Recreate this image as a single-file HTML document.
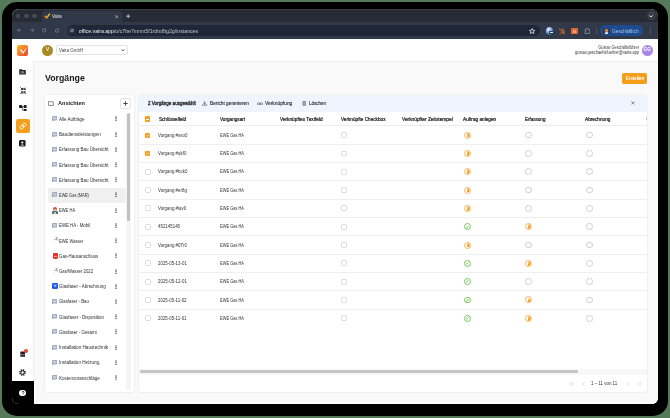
<!DOCTYPE html>
<html><head><meta charset="utf-8"><style>
html,body{margin:0;padding:0;width:670px;height:418px;overflow:hidden;background:#547a59;font-family:"Liberation Sans",sans-serif}
#frame{position:absolute;left:2px;top:1.6px;width:665.8px;height:414.1px;background:#000;border-radius:15px}
#win{position:absolute;left:12px;top:9px;width:646.4px;height:394.5px;border-radius:6.5px 7.5px 6px 6px;overflow:hidden;background:#f9f9f9}
#in{position:absolute;left:-12px;top:-9px;width:670px;height:418px;will-change:transform}
</style></head><body>
<div id="frame"></div>
<div id="win"><div id="in">
<div style="position:absolute;left:12.00px;top:9.00px;width:647.00px;height:13.30px;background:#272b35"></div>
<div style="position:absolute;left:12.00px;top:8.60px;width:647.00px;height:1.30px;background:#3a3e46"></div>
<div style="position:absolute;left:41.50px;top:11.00px;width:80.50px;height:12.00px;background:#313949;border-radius:3.5px 3.5px 0 0"></div>
<div style="position:absolute;left:16.30px;top:14.00px;width:4.20px;height:4.20px;border-radius:50%;box-sizing:border-box;background:#474b54"></div>
<div style="position:absolute;left:24.40px;top:14.00px;width:4.20px;height:4.20px;border-radius:50%;box-sizing:border-box;background:#474b54"></div>
<div style="position:absolute;left:32.40px;top:14.00px;width:4.20px;height:4.20px;border-radius:50%;box-sizing:border-box;background:#474b54"></div>
<svg style="position:absolute;left:43.80px;top:12.80px" width="6.4" height="5.8" viewBox="0 0 6.4 5.8"><defs><linearGradient id="tg" x1="0" y1="1" x2="1" y2="0"><stop offset="0" stop-color="#f08a1e"/><stop offset="1" stop-color="#f7cf1d"/></linearGradient></defs><path d="M0.7 2.9L2.6 5L5.8 0.6" stroke="url(#tg)" stroke-width="1.4" fill="none" stroke-linejoin="round"/></svg>
<div style="position:absolute;left:52.40px;top:12.95px;font-size:5.000px;line-height:6.50px;color:#e3e5e8;font-weight:400;white-space:nowrap;transform:scaleX(0.8495);transform-origin:0 50%">Vaira</div>
<svg style="position:absolute;left:114.80px;top:14.50px" width="3.4" height="3.4" viewBox="0 0 3.4 3.4"><path d="M0.3 0.3L3.1 3.1M3.1 0.3L0.3 3.1" stroke="#c7cacf" stroke-width="0.7"/></svg>
<svg style="position:absolute;left:126.30px;top:14.00px" width="4.4" height="4.4" viewBox="0 0 4.4 4.4"><path d="M2.2 0.2V4.2M0.2 2.2H4.2" stroke="#d0d3d8" stroke-width="0.85"/></svg>
<div style="position:absolute;left:646.70px;top:11.10px;width:9.40px;height:9.40px;background:#3a3e47;border-radius:4.7px"></div>
<svg style="position:absolute;left:649.40px;top:14.60px" width="4" height="2.8" viewBox="0 0 4 2.8"><path d="M0.5 0.5L2 2.1L3.5 0.5" stroke="#eceef1" stroke-width="0.95" fill="none"/></svg>
<div style="position:absolute;left:12.00px;top:22.30px;width:647.00px;height:16.30px;background:#313949"></div>
<svg style="position:absolute;left:16.80px;top:28.40px" width="4.4" height="4.4" viewBox="0 0 4.4 4.4"><path d="M4.2 2.2H0.6M2.2 0.5L0.5 2.2L2.2 3.9" stroke="#8d939c" stroke-width="0.6" fill="none"/></svg>
<svg style="position:absolute;left:29.70px;top:28.40px" width="4.4" height="4.4" viewBox="0 0 4.4 4.4"><path d="M0.2 2.2H3.8M2.2 0.5L3.9 2.2L2.2 3.9" stroke="#8d939c" stroke-width="0.6" fill="none"/></svg>
<svg style="position:absolute;left:42.20px;top:28.40px" width="4.4" height="4.4" viewBox="0 0 4.4 4.4"><path d="M3.7 1.2A1.8 1.8 0 1 0 4 2.4" stroke="#8d939c" stroke-width="0.6" fill="none"/><path d="M3.9 0.2V1.5H2.6" stroke="#8d939c" stroke-width="0.6" fill="none"/></svg>
<svg style="position:absolute;left:54.70px;top:28.30px" width="4.4" height="4.4" viewBox="0 0 4.4 4.4"><path d="M0.5 2L2.2 0.5L3.9 2V4H0.5Z" stroke="#8d939c" stroke-width="0.6" fill="none"/></svg>
<div style="position:absolute;left:67.00px;top:25.30px;width:473.00px;height:10.80px;background:#1f2637;border-radius:5.4px"></div>
<div style="position:absolute;left:68.20px;top:27.10px;width:7.20px;height:7.20px;border-radius:50%;box-sizing:border-box;background:#2d3443"></div>
<svg style="position:absolute;left:69.80px;top:28.90px" width="4" height="3.6" viewBox="0 0 4 3.6"><path d="M0.2 0.8H2M3 0.8H3.8M0.2 2.8H1M2 2.8H3.8" stroke="#c9ccd1" stroke-width="0.55"/><circle cx="2.5" cy="0.8" r="0.55" stroke="#c9ccd1" stroke-width="0.5" fill="none"/><circle cx="1.5" cy="2.8" r="0.55" stroke="#c9ccd1" stroke-width="0.5" fill="none"/></svg>
<div style="position:absolute;left:78.80px;top:27.62px;font-size:5.200px;line-height:6.76px;color:#bfc3ca;font-weight:400;white-space:nowrap;transform-origin:0 50%"><span style="color:#eceef1">office.vaira.app</span>/o/c7be7mnm5f1rdro8tg2g/instances</div>
<svg style="position:absolute;left:529.30px;top:27.80px" width="6.4" height="6.2" viewBox="0 0 6.4 6.2"><path d="M3.2 0.5L4 2.3L5.9 2.4L4.4 3.6L4.9 5.5L3.2 4.5L1.5 5.5L2 3.6L0.5 2.4L2.4 2.3Z" stroke="#e3e6ea" stroke-width="0.8" fill="none" stroke-linejoin="round"/></svg>
<div style="position:absolute;left:546.3px;top:27.4px;width:7.2px;height:7.2px;border-radius:50%;background:radial-gradient(circle at 35% 30%,#e8f0fb 0%,#8fb5e6 35%,#2f63b0 70%,#1e3f7a 100%)"></div>
<div style="position:absolute;left:549.20px;top:31.20px;width:4.00px;height:2.60px;background:#2a3f66;border-radius:0.6px"></div>
<div style="position:absolute;left:549.80px;top:31.70px;width:2.80px;height:1.40px;background:#d5e2f5"></div>
<svg style="position:absolute;left:558.80px;top:27.50px" width="6.6" height="7" viewBox="0 0 6.6 7"><circle cx="4" cy="3.8" r="1.3" stroke="#e2703a" stroke-width="0.9" fill="none"/><path d="M4 2.4V0.6M2.8 4.4L1 6.2M5 5L6 6.4M2.9 3L0.8 1.2" stroke="#e2703a" stroke-width="0.8" stroke-linecap="round"/><circle cx="0.9" cy="1.1" r="0.7" fill="#e2703a"/></svg>
<div style="position:absolute;left:571.00px;top:28.00px;width:6.50px;height:6.10px;background:#d86a33;border-radius:0.6px"></div>
<div style="position:absolute;left:572.60px;top:29.50px;width:3.30px;height:3.10px;background:#ea9a6e"></div>
<svg style="position:absolute;left:583.80px;top:27.80px" width="6.4" height="6.4" viewBox="0 0 6.4 6.4"><path d="M1 1.3H2.6Q2.6 0.4 3.3 0.4Q4 0.4 4 1.3H5.4V2.8Q6.1 2.8 6.1 3.5Q6.1 4.2 5.4 4.2V5.6H1V4.2Q1.7 4.2 1.7 3.5Q1.7 2.8 1 2.8Z" stroke="#9ea3aa" stroke-width="0.7" fill="none"/></svg>
<div style="position:absolute;left:596.10px;top:27.80px;width:0.60px;height:6.20px;background:#4d535d"></div>
<div style="position:absolute;left:599.70px;top:25.20px;width:43.40px;height:11.30px;background:#1d4b8d;border-radius:5.65px"></div>
<div style="position:absolute;left:603.40px;top:27.90px;width:6.20px;height:6.20px;border-radius:50%;box-sizing:border-box;background:#3b3a40"></div>
<div style="position:absolute;left:605.40px;top:29.30px;width:2.60px;height:2.60px;border-radius:50%;box-sizing:border-box;background:#c98a62"></div>
<div style="position:absolute;left:605.40px;top:32.20px;width:2.60px;height:1.60px;background:#e0e0e0;border-radius:1px 1px 0 0"></div>
<div style="position:absolute;left:612.20px;top:27.52px;font-size:5.200px;line-height:6.76px;color:#a8c3ec;font-weight:400;white-space:nowrap;transform:scaleX(0.9332);transform-origin:0 50%">Geschäftlich</div>
<svg style="position:absolute;left:649.60px;top:27.40px" width="1.8" height="7" viewBox="0 0 1.8 7"><circle cx="0.9" cy="1" r="0.55" fill="#a9aeb5"/><circle cx="0.9" cy="3.4" r="0.55" fill="#a9aeb5"/><circle cx="0.9" cy="5.8" r="0.55" fill="#a9aeb5"/></svg>
<div style="position:absolute;left:12.00px;top:38.60px;width:647.00px;height:365.00px;background:#f9f9f9"></div>
<div style="position:absolute;left:12.00px;top:38.60px;width:647.00px;height:22.20px;background:#fff"></div>
<div style="position:absolute;left:12.00px;top:60.60px;width:647.00px;height:0.80px;background:#ececec"></div>
<div style="position:absolute;left:12.00px;top:61.40px;width:21.00px;height:343.00px;background:#fff"></div>
<div style="position:absolute;left:33.00px;top:61.40px;width:0.60px;height:343.00px;background:#efefef"></div>
<div style="position:absolute;left:17.3px;top:44.6px;width:11.1px;height:11.1px;border-radius:2px;background:linear-gradient(135deg,#f9b41c 0%,#f5842a 45%,#ec5a2c 80%,#e4432a 100%)"></div>
<svg style="position:absolute;left:17.30px;top:44.60px" width="11.1" height="11.1" viewBox="0 0 11.1 11.1"><path d="M2.9 5.1L4.7 4.4L6 6.9L9.2 2.9L9.6 3.3L6.2 8.9Z" fill="#f2f7fa"/></svg>
<div style="position:absolute;left:42.00px;top:44.50px;width:11.20px;height:11.20px;border-radius:50%;box-sizing:border-box;background:#a98b26"></div>
<div style="position:absolute;left:-52.40px;width:200px;text-align:center;top:47.21px;font-size:4.600px;line-height:5.98px;color:#f6efd8;font-weight:700;white-space:nowrap;transform-origin:50% 50%">V</div>
<div style="position:absolute;left:56.30px;top:44.50px;width:71.40px;height:10.90px;border:0.6px solid #e3e3e3;border-radius:1.8px;background:#fff;box-sizing:border-box"></div>
<div style="position:absolute;left:59.20px;top:46.95px;font-size:5.000px;line-height:6.50px;color:#4a4a4a;font-weight:400;white-space:nowrap;transform:scaleX(0.8918);transform-origin:0 50%">Vaira GmbH</div>
<svg style="position:absolute;left:120.90px;top:48.90px" width="3.8" height="2.6" viewBox="0 0 3.8 2.6"><path d="M0.4 0.4L1.9 2L3.4 0.4" stroke="#333" stroke-width="0.8" fill="none"/></svg>
<div style="position:absolute;right:31.20px;top:44.54px;font-size:4.550px;line-height:5.92px;color:#3a3a3a;font-weight:400;white-space:nowrap;transform:scaleX(0.8492);transform-origin:100% 50%">Gustav Geschäftsführer</div>
<div style="position:absolute;right:31.20px;top:49.94px;font-size:4.550px;line-height:5.92px;color:#3a3a3a;font-weight:400;white-space:nowrap;transform:scaleX(0.8639);transform-origin:100% 50%">gustav.geschaeftsfuehrer@vaira.app</div>
<div style="position:absolute;left:641.60px;top:44.50px;width:11.20px;height:11.20px;border-radius:50%;box-sizing:border-box;background:#a887e2"></div>
<div style="position:absolute;left:547.20px;width:200px;text-align:center;top:47.15px;font-size:4.700px;line-height:6.11px;color:#fff;font-weight:700;white-space:nowrap;transform-origin:50% 50%">GG</div>
<svg style="position:absolute;left:19.20px;top:69.40px" width="7" height="5.8" viewBox="0 0 7 5.8"><path d="M0.2 0.9Q0.2 0.2 0.9 0.2H2.7L3.4 0.9H6.2Q6.8 0.9 6.8 1.5V5Q6.8 5.6 6.2 5.6H0.9Q0.2 5.6 0.2 5Z" fill="#1d1d1f"/><path d="M1.5 2.2H5.3V4.5H1.5Z" fill="#9a9a9a"/><path d="M2 3H4.6M2 3.8H4" stroke="#1d1d1f" stroke-width="0.4"/></svg>
<svg style="position:absolute;left:19.80px;top:86.80px" width="6.6" height="7.4" viewBox="0 0 6.6 7.4"><path d="M0.4 0.4L2.6 2.6M2.6 0.9V2.6H0.9M6.2 0.4L4 2.6M4 0.9V2.6H5.7M0.4 7L2.6 4.8M0.9 4.8H2.6V6.5M6.2 7L4 4.8M5.7 4.8H4V6.5" stroke="#1d1d1f" stroke-width="0.9" fill="none"/></svg>
<svg style="position:absolute;left:18.90px;top:104.70px" width="7.8" height="6.6" viewBox="0 0 7.8 6.6"><rect x="0.1" y="0.1" width="3" height="3" rx="0.7" fill="#1d1d1f"/><rect x="4.8" y="0.1" width="2.8" height="3" rx="0.7" fill="#1d1d1f"/><rect x="4.8" y="3.9" width="2.8" height="2.6" rx="0.7" fill="#1d1d1f"/><path d="M3 1.6H5M3.6 1.6V5.2H5" stroke="#1d1d1f" stroke-width="0.6" fill="none"/></svg>
<div style="position:absolute;left:15.90px;top:119.10px;width:14.00px;height:13.80px;background:#f59e1b;border-radius:2.2px"></div>
<svg style="position:absolute;left:18.90px;top:122.00px" width="8" height="8" viewBox="0 0 8 8"><g transform="rotate(-45 4 4)"><rect x="0.4" y="2.5" width="4.2" height="3" rx="1.5" stroke="#fff" stroke-width="0.9" fill="none"/><rect x="3.4" y="2.5" width="4.2" height="3" rx="1.5" stroke="#fff" stroke-width="0.9" fill="none"/></g></svg>
<svg style="position:absolute;left:19.20px;top:140.20px" width="6.6" height="6.6" viewBox="0 0 6.6 6.6"><rect x="0" y="0" width="6.6" height="6.6" rx="1.4" fill="#1d1d1f"/><circle cx="3.3" cy="2.5" r="1.1" fill="#fff"/><path d="M1.3 5.5Q3.3 3.3 5.3 5.5Z" fill="#fff"/></svg>
<svg style="position:absolute;left:19.60px;top:351.20px" width="5.8" height="6" viewBox="0 0 5.8 6"><path d="M0.4 1.2Q0.4 0.6 1 0.6H4.8Q5.4 0.6 5.4 1.2V5.2Q5.4 5.7 4.8 5.7H1Q0.4 5.7 0.4 5.2Z" fill="#1d1d1f"/><path d="M1 3.4H2.1L2.5 4H3.3L3.7 3.4H4.8" stroke="#fff" stroke-width="0.5" fill="none"/></svg>
<div style="position:absolute;left:24.35px;top:349.15px;width:3.50px;height:3.50px;border-radius:50%;box-sizing:border-box;background:#ee4b3f"></div>
<svg style="position:absolute;left:19.10px;top:368.80px" width="7" height="7" viewBox="0 0 7 7"><circle cx="3.5" cy="3.5" r="2.5" stroke="#1d1d1f" stroke-width="1.8" stroke-dasharray="1.1 0.86" fill="none"/><circle cx="3.5" cy="3.5" r="1.7" stroke="#1d1d1f" stroke-width="0.9" fill="none"/></svg>
<div style="position:absolute;left:12.00px;top:381.00px;width:21.60px;height:23.00px;background:#000"></div>
<div style="position:absolute;left:33.60px;top:381.00px;width:1.40px;height:23.00px;background:#fff"></div>
<div style="position:absolute;left:33.60px;top:401.70px;width:626.00px;height:2.00px;background:#fff"></div>
<div style="position:absolute;left:19.40px;top:389.50px;width:6.40px;height:6.40px;border-radius:50%;box-sizing:border-box;background:#fff"></div>
<svg style="position:absolute;left:20.60px;top:390.50px" width="4" height="4.4" viewBox="0 0 4 4.4"><path d="M1 1.4Q1 0.4 2 0.4Q3.1 0.4 3.1 1.4Q3.1 2 2.3 2.4Q2 2.6 2 3.1" stroke="#000" stroke-width="0.7" fill="none"/><circle cx="2" cy="4" r="0.4" fill="#000"/></svg>
<div style="position:absolute;left:44.90px;top:72.92px;font-size:9.200px;line-height:11.96px;color:#1a1a1a;font-weight:700;white-space:nowrap;transform:scaleX(0.9558);transform-origin:0 50%">Vorgänge</div>
<div style="position:absolute;left:622.00px;top:72.50px;width:25.00px;height:11.10px;background:#f59e1b;border-radius:1.8px"></div>
<div style="position:absolute;left:534.50px;width:200px;text-align:center;top:74.65px;font-size:5.000px;line-height:6.50px;color:#fff;font-weight:700;white-space:nowrap;transform:scaleX(0.8665);transform-origin:50% 50%">Erstellen</div>
<div style="position:absolute;left:45.00px;top:95.00px;width:88.50px;height:297.00px;background:#fff;border-radius:2px;box-shadow:0 0 0 0.6px #ececec,0 0.6px 1px rgba(0,0,0,0.04)"></div>
<svg style="position:absolute;left:47.80px;top:101.00px" width="6.2" height="4.8" viewBox="0 0 6.2 4.8"><path d="M0.4 0.9Q0.4 0.4 0.9 0.4H2.4L3 1H5.3Q5.8 1 5.8 1.5V4Q5.8 4.4 5.3 4.4H0.9Q0.4 4.4 0.4 4Z" stroke="#333" stroke-width="0.6" fill="none"/></svg>
<div style="position:absolute;left:57.60px;top:99.60px;font-size:6.000px;line-height:7.80px;color:#222;font-weight:700;white-space:nowrap;transform:scaleX(0.9310);transform-origin:0 50%">Ansichten</div>
<div style="position:absolute;left:120.10px;top:97.80px;width:10.60px;height:10.80px;border:0.6px solid #e4e4e4;border-radius:1.8px;background:#fff;box-sizing:border-box"></div>
<svg style="position:absolute;left:122.80px;top:100.90px" width="5" height="5" viewBox="0 0 5 5"><path d="M2.5 0.2V4.8M0.2 2.5H4.8" stroke="#222" stroke-width="0.75"/></svg>
<div style="position:absolute;left:126.00px;top:112.50px;width:4.60px;height:277.00px;background:#f5f5f5"></div>
<div style="position:absolute;left:126.60px;top:112.50px;width:3.40px;height:108.00px;background:#c1c1c1;border-radius:1.7px"></div>
<svg style="position:absolute;left:52.00px;top:116.30px" width="5.4" height="5.2" viewBox="0 0 5.4 5.2"><path d="M0.5 1Q0.5 0.5 1 0.5H4.6Q5 0.5 5 1V3.6Q5 4.1 4.6 4.1H1.6L0.5 4.9Z" fill="#c3cddb" stroke="#6f7f98" stroke-width="0.6"/></svg>
<div style="position:absolute;left:59.10px;top:115.85px;font-size:5.000px;line-height:6.50px;color:#2e2e2e;font-weight:400;white-space:nowrap;transform:scaleX(0.9030);transform-origin:0 50%">Alle Aufträge</div>
<svg style="position:absolute;left:115.10px;top:116.30px" width="2" height="5.6" viewBox="0 0 2 5.6"><circle cx="1" cy="1" r="0.68" fill="#3a3a3a"/><circle cx="1" cy="2.8" r="0.68" fill="#3a3a3a"/><circle cx="1" cy="4.6" r="0.68" fill="#3a3a3a"/></svg>
<svg style="position:absolute;left:52.00px;top:131.52px" width="5.4" height="5.2" viewBox="0 0 5.4 5.2"><path d="M0.5 1Q0.5 0.5 1 0.5H4.6Q5 0.5 5 1V3.6Q5 4.1 4.6 4.1H1.6L0.5 4.9Z" fill="#c3cddb" stroke="#6f7f98" stroke-width="0.6"/></svg>
<div style="position:absolute;left:59.10px;top:131.07px;font-size:5.000px;line-height:6.50px;color:#2e2e2e;font-weight:400;white-space:nowrap;transform:scaleX(0.9260);transform-origin:0 50%">Baudienstleistungen</div>
<svg style="position:absolute;left:115.10px;top:131.52px" width="2" height="5.6" viewBox="0 0 2 5.6"><circle cx="1" cy="1" r="0.68" fill="#3a3a3a"/><circle cx="1" cy="2.8" r="0.68" fill="#3a3a3a"/><circle cx="1" cy="4.6" r="0.68" fill="#3a3a3a"/></svg>
<svg style="position:absolute;left:52.00px;top:146.74px" width="5.4" height="5.2" viewBox="0 0 5.4 5.2"><path d="M0.5 1Q0.5 0.5 1 0.5H4.6Q5 0.5 5 1V3.6Q5 4.1 4.6 4.1H1.6L0.5 4.9Z" fill="#c3cddb" stroke="#6f7f98" stroke-width="0.6"/></svg>
<div style="position:absolute;left:59.10px;top:146.29px;font-size:5.000px;line-height:6.50px;color:#2e2e2e;font-weight:400;white-space:nowrap;transform:scaleX(0.8969);transform-origin:0 50%">Erfassung Bau Übersicht</div>
<svg style="position:absolute;left:115.10px;top:146.74px" width="2" height="5.6" viewBox="0 0 2 5.6"><circle cx="1" cy="1" r="0.68" fill="#3a3a3a"/><circle cx="1" cy="2.8" r="0.68" fill="#3a3a3a"/><circle cx="1" cy="4.6" r="0.68" fill="#3a3a3a"/></svg>
<svg style="position:absolute;left:52.00px;top:161.96px" width="5.4" height="5.2" viewBox="0 0 5.4 5.2"><path d="M0.5 1Q0.5 0.5 1 0.5H4.6Q5 0.5 5 1V3.6Q5 4.1 4.6 4.1H1.6L0.5 4.9Z" fill="#c3cddb" stroke="#6f7f98" stroke-width="0.6"/></svg>
<div style="position:absolute;left:59.10px;top:161.51px;font-size:5.000px;line-height:6.50px;color:#2e2e2e;font-weight:400;white-space:nowrap;transform:scaleX(0.8969);transform-origin:0 50%">Erfassung Bau Übersicht</div>
<svg style="position:absolute;left:115.10px;top:161.96px" width="2" height="5.6" viewBox="0 0 2 5.6"><circle cx="1" cy="1" r="0.68" fill="#3a3a3a"/><circle cx="1" cy="2.8" r="0.68" fill="#3a3a3a"/><circle cx="1" cy="4.6" r="0.68" fill="#3a3a3a"/></svg>
<svg style="position:absolute;left:52.00px;top:177.18px" width="5.4" height="5.2" viewBox="0 0 5.4 5.2"><path d="M0.5 1Q0.5 0.5 1 0.5H4.6Q5 0.5 5 1V3.6Q5 4.1 4.6 4.1H1.6L0.5 4.9Z" fill="#c3cddb" stroke="#6f7f98" stroke-width="0.6"/></svg>
<div style="position:absolute;left:59.10px;top:176.73px;font-size:5.000px;line-height:6.50px;color:#2e2e2e;font-weight:400;white-space:nowrap;transform:scaleX(0.8969);transform-origin:0 50%">Erfassung Bau Übersicht</div>
<svg style="position:absolute;left:115.10px;top:177.18px" width="2" height="5.6" viewBox="0 0 2 5.6"><circle cx="1" cy="1" r="0.68" fill="#3a3a3a"/><circle cx="1" cy="2.8" r="0.68" fill="#3a3a3a"/><circle cx="1" cy="4.6" r="0.68" fill="#3a3a3a"/></svg>
<div style="position:absolute;left:47.90px;top:188.00px;width:77.70px;height:14.60px;background:#f0f0f0;border-radius:1.5px"></div>
<svg style="position:absolute;left:52.00px;top:192.40px" width="5.4" height="5.2" viewBox="0 0 5.4 5.2"><path d="M0.5 1Q0.5 0.5 1 0.5H4.6Q5 0.5 5 1V3.6Q5 4.1 4.6 4.1H1.6L0.5 4.9Z" fill="#c3cddb" stroke="#6f7f98" stroke-width="0.6"/></svg>
<div style="position:absolute;left:59.10px;top:191.95px;font-size:5.000px;line-height:6.50px;color:#2e2e2e;font-weight:400;white-space:nowrap;transform:scaleX(0.7915);transform-origin:0 50%">EWE Gas (MAR)</div>
<svg style="position:absolute;left:115.10px;top:192.40px" width="2" height="5.6" viewBox="0 0 2 5.6"><circle cx="1" cy="1" r="0.68" fill="#3a3a3a"/><circle cx="1" cy="2.8" r="0.68" fill="#3a3a3a"/><circle cx="1" cy="4.6" r="0.68" fill="#3a3a3a"/></svg>
<div style="position:absolute;left:52.40px;top:210.62px;width:5.20px;height:3.20px;background:#4a6ea8;border-radius:1px 1px 0.3px 0.3px"></div>
<div style="position:absolute;left:53.60px;top:211.82px;width:2.80px;height:2.00px;background:#e8c24a"></div>
<div style="position:absolute;left:52.70px;top:206.82px;width:4.40px;height:4.40px;border-radius:50%;box-sizing:border-box;background:#c65b35"></div>
<div style="position:absolute;left:53.60px;top:208.52px;width:2.60px;height:2.60px;border-radius:50%;box-sizing:border-box;background:#f1c8a0"></div>
<div style="position:absolute;left:59.10px;top:207.17px;font-size:5.000px;line-height:6.50px;color:#2e2e2e;font-weight:400;white-space:nowrap;transform:scaleX(0.8162);transform-origin:0 50%">EWE HA</div>
<svg style="position:absolute;left:115.10px;top:207.62px" width="2" height="5.6" viewBox="0 0 2 5.6"><circle cx="1" cy="1" r="0.68" fill="#3a3a3a"/><circle cx="1" cy="2.8" r="0.68" fill="#3a3a3a"/><circle cx="1" cy="4.6" r="0.68" fill="#3a3a3a"/></svg>
<svg style="position:absolute;left:52.00px;top:222.84px" width="5.4" height="5.2" viewBox="0 0 5.4 5.2"><path d="M0.5 1Q0.5 0.5 1 0.5H4.6Q5 0.5 5 1V3.6Q5 4.1 4.6 4.1H1.6L0.5 4.9Z" fill="#c3cddb" stroke="#6f7f98" stroke-width="0.6"/></svg>
<div style="position:absolute;left:59.10px;top:222.39px;font-size:5.000px;line-height:6.50px;color:#2e2e2e;font-weight:400;white-space:nowrap;transform:scaleX(0.8677);transform-origin:0 50%">EWE HA - Mobil</div>
<svg style="position:absolute;left:115.10px;top:222.84px" width="2" height="5.6" viewBox="0 0 2 5.6"><circle cx="1" cy="1" r="0.68" fill="#3a3a3a"/><circle cx="1" cy="2.8" r="0.68" fill="#3a3a3a"/><circle cx="1" cy="4.6" r="0.68" fill="#3a3a3a"/></svg>
<svg style="position:absolute;left:52.40px;top:237.46px" width="6" height="6.4" viewBox="0 0 6 6.4"><path d="M3.6 0.6H5.6M4.6 0.6V2.6M2.4 2.4H5.4V3.6" stroke="#8f98a3" stroke-width="0.8" fill="none"/><path d="M1.6 4Q0.5 5.5 1.6 6Q2.7 5.5 1.6 4" fill="#c7dcf2"/></svg>
<div style="position:absolute;left:59.10px;top:237.61px;font-size:5.000px;line-height:6.50px;color:#2e2e2e;font-weight:400;white-space:nowrap;transform:scaleX(0.8193);transform-origin:0 50%">EWE Wasser</div>
<svg style="position:absolute;left:115.10px;top:238.06px" width="2" height="5.6" viewBox="0 0 2 5.6"><circle cx="1" cy="1" r="0.68" fill="#3a3a3a"/><circle cx="1" cy="2.8" r="0.68" fill="#3a3a3a"/><circle cx="1" cy="4.6" r="0.68" fill="#3a3a3a"/></svg>
<div style="position:absolute;left:52.80px;top:253.48px;width:5.20px;height:6.00px;background:#e2352b;border-radius:1px 1px 1.6px 1.6px"></div>
<div style="position:absolute;left:53.80px;top:255.98px;width:3.20px;height:1.20px;background:#f39a8a"></div>
<div style="position:absolute;left:59.10px;top:252.83px;font-size:5.000px;line-height:6.50px;color:#2e2e2e;font-weight:400;white-space:nowrap;transform:scaleX(0.8784);transform-origin:0 50%">Gas-Hausanschluss</div>
<svg style="position:absolute;left:115.10px;top:253.28px" width="2" height="5.6" viewBox="0 0 2 5.6"><circle cx="1" cy="1" r="0.68" fill="#3a3a3a"/><circle cx="1" cy="2.8" r="0.68" fill="#3a3a3a"/><circle cx="1" cy="4.6" r="0.68" fill="#3a3a3a"/></svg>
<svg style="position:absolute;left:52.40px;top:267.90px" width="6" height="6.4" viewBox="0 0 6 6.4"><path d="M3.6 0.6H5.6M4.6 0.6V2.6M2.4 2.4H5.4V3.6" stroke="#8f98a3" stroke-width="0.8" fill="none"/><path d="M1.6 4Q0.5 5.5 1.6 6Q2.7 5.5 1.6 4" fill="#c7dcf2"/></svg>
<div style="position:absolute;left:59.10px;top:268.05px;font-size:5.000px;line-height:6.50px;color:#2e2e2e;font-weight:400;white-space:nowrap;transform:scaleX(0.8536);transform-origin:0 50%">Gas/Wasser 2022</div>
<svg style="position:absolute;left:115.10px;top:268.50px" width="2" height="5.6" viewBox="0 0 2 5.6"><circle cx="1" cy="1" r="0.68" fill="#3a3a3a"/><circle cx="1" cy="2.8" r="0.68" fill="#3a3a3a"/><circle cx="1" cy="4.6" r="0.68" fill="#3a3a3a"/></svg>
<div style="position:absolute;left:52.00px;top:283.32px;width:6.30px;height:6.00px;background:#1f5ae8;border-radius:1.3px"></div>
<svg style="position:absolute;left:52.00px;top:283.32px" width="6.3" height="6" viewBox="0 0 6.3 6"><path d="M1.4 1.8H4.9L3.15 4.6Z" fill="#a9c2fb"/></svg>
<div style="position:absolute;left:59.10px;top:283.27px;font-size:5.000px;line-height:6.50px;color:#2e2e2e;font-weight:400;white-space:nowrap;transform:scaleX(0.8891);transform-origin:0 50%">Glasfaser - Abrechnung</div>
<svg style="position:absolute;left:115.10px;top:283.72px" width="2" height="5.6" viewBox="0 0 2 5.6"><circle cx="1" cy="1" r="0.68" fill="#3a3a3a"/><circle cx="1" cy="2.8" r="0.68" fill="#3a3a3a"/><circle cx="1" cy="4.6" r="0.68" fill="#3a3a3a"/></svg>
<svg style="position:absolute;left:52.00px;top:298.94px" width="5.4" height="5.2" viewBox="0 0 5.4 5.2"><path d="M0.5 1Q0.5 0.5 1 0.5H4.6Q5 0.5 5 1V3.6Q5 4.1 4.6 4.1H1.6L0.5 4.9Z" fill="#c3cddb" stroke="#6f7f98" stroke-width="0.6"/></svg>
<div style="position:absolute;left:59.10px;top:298.49px;font-size:5.000px;line-height:6.50px;color:#2e2e2e;font-weight:400;white-space:nowrap;transform:scaleX(0.8608);transform-origin:0 50%">Glasfaser - Bau</div>
<svg style="position:absolute;left:115.10px;top:298.94px" width="2" height="5.6" viewBox="0 0 2 5.6"><circle cx="1" cy="1" r="0.68" fill="#3a3a3a"/><circle cx="1" cy="2.8" r="0.68" fill="#3a3a3a"/><circle cx="1" cy="4.6" r="0.68" fill="#3a3a3a"/></svg>
<svg style="position:absolute;left:52.00px;top:314.16px" width="5.4" height="5.2" viewBox="0 0 5.4 5.2"><path d="M0.5 1Q0.5 0.5 1 0.5H4.6Q5 0.5 5 1V3.6Q5 4.1 4.6 4.1H1.6L0.5 4.9Z" fill="#c3cddb" stroke="#6f7f98" stroke-width="0.6"/></svg>
<div style="position:absolute;left:59.10px;top:313.71px;font-size:5.000px;line-height:6.50px;color:#2e2e2e;font-weight:400;white-space:nowrap;transform:scaleX(0.8948);transform-origin:0 50%">Glasfaser - Disposition</div>
<svg style="position:absolute;left:115.10px;top:314.16px" width="2" height="5.6" viewBox="0 0 2 5.6"><circle cx="1" cy="1" r="0.68" fill="#3a3a3a"/><circle cx="1" cy="2.8" r="0.68" fill="#3a3a3a"/><circle cx="1" cy="4.6" r="0.68" fill="#3a3a3a"/></svg>
<svg style="position:absolute;left:52.00px;top:329.38px" width="5.4" height="5.2" viewBox="0 0 5.4 5.2"><path d="M0.5 1Q0.5 0.5 1 0.5H4.6Q5 0.5 5 1V3.6Q5 4.1 4.6 4.1H1.6L0.5 4.9Z" fill="#c3cddb" stroke="#6f7f98" stroke-width="0.6"/></svg>
<div style="position:absolute;left:59.10px;top:328.93px;font-size:5.000px;line-height:6.50px;color:#2e2e2e;font-weight:400;white-space:nowrap;transform:scaleX(0.8721);transform-origin:0 50%">Glasfaser - Gesamt</div>
<svg style="position:absolute;left:115.10px;top:329.38px" width="2" height="5.6" viewBox="0 0 2 5.6"><circle cx="1" cy="1" r="0.68" fill="#3a3a3a"/><circle cx="1" cy="2.8" r="0.68" fill="#3a3a3a"/><circle cx="1" cy="4.6" r="0.68" fill="#3a3a3a"/></svg>
<svg style="position:absolute;left:52.00px;top:344.60px" width="5.4" height="5.2" viewBox="0 0 5.4 5.2"><path d="M0.5 1Q0.5 0.5 1 0.5H4.6Q5 0.5 5 1V3.6Q5 4.1 4.6 4.1H1.6L0.5 4.9Z" fill="#c3cddb" stroke="#6f7f98" stroke-width="0.6"/></svg>
<div style="position:absolute;left:59.10px;top:344.15px;font-size:5.000px;line-height:6.50px;color:#2e2e2e;font-weight:400;white-space:nowrap;transform:scaleX(0.9298);transform-origin:0 50%">Installation Haustechnik</div>
<svg style="position:absolute;left:115.10px;top:344.60px" width="2" height="5.6" viewBox="0 0 2 5.6"><circle cx="1" cy="1" r="0.68" fill="#3a3a3a"/><circle cx="1" cy="2.8" r="0.68" fill="#3a3a3a"/><circle cx="1" cy="4.6" r="0.68" fill="#3a3a3a"/></svg>
<svg style="position:absolute;left:52.00px;top:359.82px" width="5.4" height="5.2" viewBox="0 0 5.4 5.2"><path d="M0.5 1Q0.5 0.5 1 0.5H4.6Q5 0.5 5 1V3.6Q5 4.1 4.6 4.1H1.6L0.5 4.9Z" fill="#c3cddb" stroke="#6f7f98" stroke-width="0.6"/></svg>
<div style="position:absolute;left:59.10px;top:359.37px;font-size:5.000px;line-height:6.50px;color:#2e2e2e;font-weight:400;white-space:nowrap;transform:scaleX(0.9195);transform-origin:0 50%">Installation Heizung,</div>
<svg style="position:absolute;left:115.10px;top:359.82px" width="2" height="5.6" viewBox="0 0 2 5.6"><circle cx="1" cy="1" r="0.68" fill="#3a3a3a"/><circle cx="1" cy="2.8" r="0.68" fill="#3a3a3a"/><circle cx="1" cy="4.6" r="0.68" fill="#3a3a3a"/></svg>
<svg style="position:absolute;left:52.00px;top:375.04px" width="5.4" height="5.2" viewBox="0 0 5.4 5.2"><path d="M0.5 1Q0.5 0.5 1 0.5H4.6Q5 0.5 5 1V3.6Q5 4.1 4.6 4.1H1.6L0.5 4.9Z" fill="#c3cddb" stroke="#6f7f98" stroke-width="0.6"/></svg>
<div style="position:absolute;left:59.10px;top:374.59px;font-size:5.000px;line-height:6.50px;color:#2e2e2e;font-weight:400;white-space:nowrap;transform:scaleX(0.8984);transform-origin:0 50%">Kostenvoranschläge</div>
<svg style="position:absolute;left:115.10px;top:375.04px" width="2" height="5.6" viewBox="0 0 2 5.6"><circle cx="1" cy="1" r="0.68" fill="#3a3a3a"/><circle cx="1" cy="2.8" r="0.68" fill="#3a3a3a"/><circle cx="1" cy="4.6" r="0.68" fill="#3a3a3a"/></svg>
<div style="position:absolute;left:139.00px;top:95.00px;width:508.20px;height:297.00px;background:#fff;border-radius:2px;box-shadow:0 0 0 0.6px #ececec,0 0.6px 1px rgba(0,0,0,0.04)"></div>
<div style="position:absolute;left:139.00px;top:95.00px;width:508.20px;height:16.80px;background:#eef5fe;border-radius:2px 2px 0 0"></div>
<div style="position:absolute;left:147.70px;top:100.05px;font-size:5.000px;line-height:6.50px;color:#222;font-weight:400;white-space:nowrap;-webkit-text-stroke:0.28px #222;transform:scaleX(0.9128);transform-origin:0 50%">2 Vorgänge ausgewählt</div>
<svg style="position:absolute;left:202.40px;top:101.40px" width="5.2" height="4.6" viewBox="0 0 5.2 4.6"><path d="M2.6 0.2V3M1.3 1.8L2.6 3L3.9 1.8M0.4 3.2V4.2H4.8V3.2" stroke="#333" stroke-width="0.55" fill="none"/></svg>
<div style="position:absolute;left:209.90px;top:100.15px;font-size:5.000px;line-height:6.50px;color:#2a2a2a;font-weight:400;white-space:nowrap;-webkit-text-stroke:0.12px #2a2a2a;transform:scaleX(0.9497);transform-origin:0 50%">Bericht generieren</div>
<svg style="position:absolute;left:257.20px;top:101.60px" width="5.8" height="3.8" viewBox="0 0 5.8 3.8"><rect x="0.3" y="0.8" width="2.6" height="2.2" rx="1.1" stroke="#333" stroke-width="0.55" fill="none"/><rect x="2.9" y="0.8" width="2.6" height="2.2" rx="1.1" stroke="#333" stroke-width="0.55" fill="none"/></svg>
<div style="position:absolute;left:265.00px;top:100.15px;font-size:5.000px;line-height:6.50px;color:#2a2a2a;font-weight:400;white-space:nowrap;-webkit-text-stroke:0.12px #2a2a2a;transform:scaleX(0.9723);transform-origin:0 50%">Verknüpfung</div>
<svg style="position:absolute;left:301.60px;top:101.00px" width="4.8" height="5.2" viewBox="0 0 4.8 5.2"><path d="M0.3 1H4.5M1.6 1V0.3H3.2V1M0.9 1.2L1.2 4.9H3.6L3.9 1.2M1.9 2V4M2.9 2V4" stroke="#333" stroke-width="0.5" fill="none"/></svg>
<div style="position:absolute;left:309.00px;top:100.15px;font-size:5.000px;line-height:6.50px;color:#2a2a2a;font-weight:400;white-space:nowrap;-webkit-text-stroke:0.12px #2a2a2a;transform:scaleX(0.8941);transform-origin:0 50%">Löschen</div>
<svg style="position:absolute;left:631.20px;top:101.40px" width="3.8" height="3.8" viewBox="0 0 3.8 3.8"><path d="M0.3 0.3L3.5 3.5M3.5 0.3L0.3 3.5" stroke="#444" stroke-width="0.6"/></svg>
<div style="position:absolute;left:139.00px;top:125.00px;width:508.20px;height:1.00px;background:#ececec"></div>
<div style="position:absolute;left:158.90px;top:116.05px;font-size:5.000px;line-height:6.50px;color:#222;font-weight:400;white-space:nowrap;-webkit-text-stroke:0.22px #222;transform:scaleX(0.9199);transform-origin:0 50%">Schlüsselfeld</div>
<div style="position:absolute;left:219.70px;top:116.05px;font-size:5.000px;line-height:6.50px;color:#222;font-weight:400;white-space:nowrap;-webkit-text-stroke:0.22px #222;transform:scaleX(0.9310);transform-origin:0 50%">Vorgangsart</div>
<div style="position:absolute;left:280.40px;top:116.05px;font-size:5.000px;line-height:6.50px;color:#222;font-weight:400;white-space:nowrap;-webkit-text-stroke:0.22px #222;transform:scaleX(0.9481);transform-origin:0 50%">Verknüpftes Textfeld</div>
<div style="position:absolute;left:341.20px;top:116.05px;font-size:5.000px;line-height:6.50px;color:#222;font-weight:400;white-space:nowrap;-webkit-text-stroke:0.22px #222;transform:scaleX(0.9363);transform-origin:0 50%">Verknüpfte Checkbox</div>
<div style="position:absolute;left:402.40px;top:116.05px;font-size:5.000px;line-height:6.50px;color:#222;font-weight:400;white-space:nowrap;-webkit-text-stroke:0.22px #222;transform:scaleX(0.9602);transform-origin:0 50%">Verknüpfter Zeitstempel</div>
<div style="position:absolute;left:463.20px;top:116.05px;font-size:5.000px;line-height:6.50px;color:#222;font-weight:400;white-space:nowrap;-webkit-text-stroke:0.22px #222;transform:scaleX(0.9404);transform-origin:0 50%">Auftrag anlegen</div>
<div style="position:absolute;left:524.60px;top:116.05px;font-size:5.000px;line-height:6.50px;color:#222;font-weight:400;white-space:nowrap;-webkit-text-stroke:0.22px #222;transform:scaleX(0.9062);transform-origin:0 50%">Erfassung</div>
<div style="position:absolute;left:585.40px;top:116.05px;font-size:5.000px;line-height:6.50px;color:#222;font-weight:400;white-space:nowrap;-webkit-text-stroke:0.22px #222;transform:scaleX(0.9420);transform-origin:0 50%">Abrechnung</div>
<div style="position:absolute;left:144.90px;top:116.10px;width:5.40px;height:5.50px;background:#f59e1b;border-radius:1.1px"></div>
<div style="position:absolute;left:646.20px;top:117.20px;width:0.70px;height:2.60px;background:#c8c8c8"></div>
<div style="position:absolute;left:146.20px;top:118.50px;width:2.90px;height:0.75px;background:#fff"></div>
<div style="position:absolute;left:145.00px;top:132.50px;width:5.20px;height:5.20px;background:#f59e1b;border-radius:1px"></div>
<svg style="position:absolute;left:145.00px;top:132.50px" width="5.2" height="5.2" viewBox="0 0 5.2 5.2"><path d="M1.3 2.7L2.3 3.6L4 1.6" stroke="#fff" stroke-width="0.7" fill="none"/></svg>
<div style="position:absolute;left:158.40px;top:131.85px;font-size:5.000px;line-height:6.50px;color:#333;font-weight:400;white-space:nowrap;transform:scaleX(0.8800);transform-origin:0 50%">Vorgang #sso0</div>
<div style="position:absolute;left:219.70px;top:131.85px;font-size:5.000px;line-height:6.50px;color:#333;font-weight:400;white-space:nowrap;transform:scaleX(0.7925);transform-origin:0 50%">EWE Gas HA</div>
<div style="position:absolute;left:341.40px;top:132.20px;width:5.90px;height:5.90px;border:0.65px solid #d9d9d9;border-radius:1.5px;box-sizing:border-box"></div>
<div style="position:absolute;left:464.10px;top:131.60px;width:7.00px;height:7.00px;border-radius:50%;box-sizing:border-box;border:0.8px solid #f7b55a"></div>
<svg style="position:absolute;left:465.20px;top:132.70px" width="4.8" height="4.8" viewBox="0 0 4.8 4.8"><path d="M2.4 2.4V0.2A2.2 2.2 0 1 1 1.65 4.47Z" fill="#f39a1a"/></svg>
<div style="position:absolute;left:525.10px;top:131.80px;width:6.60px;height:6.60px;border-radius:50%;box-sizing:border-box;border:0.6px solid #cfcfcf"></div>
<div style="position:absolute;left:586.20px;top:131.80px;width:6.60px;height:6.60px;border-radius:50%;box-sizing:border-box;border:0.6px solid #cfcfcf"></div>
<div style="position:absolute;left:139.00px;top:143.82px;width:508.20px;height:0.70px;background:#efefef"></div>
<div style="position:absolute;left:145.00px;top:150.82px;width:5.20px;height:5.20px;background:#f59e1b;border-radius:1px"></div>
<svg style="position:absolute;left:145.00px;top:150.82px" width="5.2" height="5.2" viewBox="0 0 5.2 5.2"><path d="M1.3 2.7L2.3 3.6L4 1.6" stroke="#fff" stroke-width="0.7" fill="none"/></svg>
<div style="position:absolute;left:158.40px;top:150.17px;font-size:5.000px;line-height:6.50px;color:#333;font-weight:400;white-space:nowrap;transform:scaleX(0.8800);transform-origin:0 50%">Vorgang #qkf0</div>
<div style="position:absolute;left:219.70px;top:150.17px;font-size:5.000px;line-height:6.50px;color:#333;font-weight:400;white-space:nowrap;transform:scaleX(0.7925);transform-origin:0 50%">EWE Gas HA</div>
<div style="position:absolute;left:341.40px;top:150.52px;width:5.90px;height:5.90px;border:0.65px solid #d9d9d9;border-radius:1.5px;box-sizing:border-box"></div>
<div style="position:absolute;left:464.10px;top:149.92px;width:7.00px;height:7.00px;border-radius:50%;box-sizing:border-box;border:0.8px solid #f7b55a"></div>
<svg style="position:absolute;left:465.20px;top:151.02px" width="4.8" height="4.8" viewBox="0 0 4.8 4.8"><path d="M2.4 2.4V0.2A2.2 2.2 0 1 1 1.65 4.47Z" fill="#f39a1a"/></svg>
<div style="position:absolute;left:525.10px;top:150.12px;width:6.60px;height:6.60px;border-radius:50%;box-sizing:border-box;border:0.6px solid #cfcfcf"></div>
<div style="position:absolute;left:586.20px;top:150.12px;width:6.60px;height:6.60px;border-radius:50%;box-sizing:border-box;border:0.6px solid #cfcfcf"></div>
<div style="position:absolute;left:139.00px;top:162.14px;width:508.20px;height:0.70px;background:#efefef"></div>
<div style="position:absolute;left:144.60px;top:168.74px;width:6.00px;height:6.00px;border:0.65px solid #d9d9d9;border-radius:1.5px;box-sizing:border-box"></div>
<div style="position:absolute;left:158.40px;top:168.49px;font-size:5.000px;line-height:6.50px;color:#333;font-weight:400;white-space:nowrap;transform:scaleX(0.8800);transform-origin:0 50%">Vorgang #bck0</div>
<div style="position:absolute;left:219.70px;top:168.49px;font-size:5.000px;line-height:6.50px;color:#333;font-weight:400;white-space:nowrap;transform:scaleX(0.7925);transform-origin:0 50%">EWE Gas HA</div>
<div style="position:absolute;left:341.40px;top:168.84px;width:5.90px;height:5.90px;border:0.65px solid #d9d9d9;border-radius:1.5px;box-sizing:border-box"></div>
<div style="position:absolute;left:464.10px;top:168.24px;width:7.00px;height:7.00px;border-radius:50%;box-sizing:border-box;border:0.8px solid #f7b55a"></div>
<svg style="position:absolute;left:465.20px;top:169.34px" width="4.8" height="4.8" viewBox="0 0 4.8 4.8"><path d="M2.4 2.4V0.2A2.2 2.2 0 1 1 1.65 4.47Z" fill="#f39a1a"/></svg>
<div style="position:absolute;left:525.10px;top:168.44px;width:6.60px;height:6.60px;border-radius:50%;box-sizing:border-box;border:0.6px solid #cfcfcf"></div>
<div style="position:absolute;left:586.20px;top:168.44px;width:6.60px;height:6.60px;border-radius:50%;box-sizing:border-box;border:0.6px solid #cfcfcf"></div>
<div style="position:absolute;left:139.00px;top:180.46px;width:508.20px;height:0.70px;background:#efefef"></div>
<div style="position:absolute;left:144.60px;top:187.06px;width:6.00px;height:6.00px;border:0.65px solid #d9d9d9;border-radius:1.5px;box-sizing:border-box"></div>
<div style="position:absolute;left:158.40px;top:186.81px;font-size:5.000px;line-height:6.50px;color:#333;font-weight:400;white-space:nowrap;transform:scaleX(0.8800);transform-origin:0 50%">Vorgang #er8g</div>
<div style="position:absolute;left:219.70px;top:186.81px;font-size:5.000px;line-height:6.50px;color:#333;font-weight:400;white-space:nowrap;transform:scaleX(0.7925);transform-origin:0 50%">EWE Gas HA</div>
<div style="position:absolute;left:341.40px;top:187.16px;width:5.90px;height:5.90px;border:0.65px solid #d9d9d9;border-radius:1.5px;box-sizing:border-box"></div>
<div style="position:absolute;left:464.10px;top:186.56px;width:7.00px;height:7.00px;border-radius:50%;box-sizing:border-box;border:0.8px solid #f7b55a"></div>
<svg style="position:absolute;left:465.20px;top:187.66px" width="4.8" height="4.8" viewBox="0 0 4.8 4.8"><path d="M2.4 2.4V0.2A2.2 2.2 0 1 1 1.65 4.47Z" fill="#f39a1a"/></svg>
<div style="position:absolute;left:525.10px;top:186.76px;width:6.60px;height:6.60px;border-radius:50%;box-sizing:border-box;border:0.6px solid #cfcfcf"></div>
<div style="position:absolute;left:586.20px;top:186.76px;width:6.60px;height:6.60px;border-radius:50%;box-sizing:border-box;border:0.6px solid #cfcfcf"></div>
<div style="position:absolute;left:139.00px;top:198.78px;width:508.20px;height:0.70px;background:#efefef"></div>
<div style="position:absolute;left:144.60px;top:205.38px;width:6.00px;height:6.00px;border:0.65px solid #d9d9d9;border-radius:1.5px;box-sizing:border-box"></div>
<div style="position:absolute;left:158.40px;top:205.13px;font-size:5.000px;line-height:6.50px;color:#333;font-weight:400;white-space:nowrap;transform:scaleX(0.8800);transform-origin:0 50%">Vorgang #iav0</div>
<div style="position:absolute;left:219.70px;top:205.13px;font-size:5.000px;line-height:6.50px;color:#333;font-weight:400;white-space:nowrap;transform:scaleX(0.7925);transform-origin:0 50%">EWE Gas HA</div>
<div style="position:absolute;left:341.40px;top:205.48px;width:5.90px;height:5.90px;border:0.65px solid #d9d9d9;border-radius:1.5px;box-sizing:border-box"></div>
<div style="position:absolute;left:464.10px;top:204.88px;width:7.00px;height:7.00px;border-radius:50%;box-sizing:border-box;border:0.8px solid #f7b55a"></div>
<svg style="position:absolute;left:465.20px;top:205.98px" width="4.8" height="4.8" viewBox="0 0 4.8 4.8"><path d="M2.4 2.4V0.2A2.2 2.2 0 1 1 1.65 4.47Z" fill="#f39a1a"/></svg>
<div style="position:absolute;left:525.10px;top:205.08px;width:6.60px;height:6.60px;border-radius:50%;box-sizing:border-box;border:0.6px solid #cfcfcf"></div>
<div style="position:absolute;left:586.20px;top:205.08px;width:6.60px;height:6.60px;border-radius:50%;box-sizing:border-box;border:0.6px solid #cfcfcf"></div>
<div style="position:absolute;left:139.00px;top:217.10px;width:508.20px;height:0.70px;background:#efefef"></div>
<div style="position:absolute;left:144.60px;top:223.70px;width:6.00px;height:6.00px;border:0.65px solid #d9d9d9;border-radius:1.5px;box-sizing:border-box"></div>
<div style="position:absolute;left:158.40px;top:223.45px;font-size:5.000px;line-height:6.50px;color:#333;font-weight:400;white-space:nowrap;transform:scaleX(0.8800);transform-origin:0 50%">452145145</div>
<div style="position:absolute;left:219.70px;top:223.45px;font-size:5.000px;line-height:6.50px;color:#333;font-weight:400;white-space:nowrap;transform:scaleX(0.7925);transform-origin:0 50%">EWE Gas HA</div>
<div style="position:absolute;left:341.40px;top:223.80px;width:5.90px;height:5.90px;border:0.65px solid #d9d9d9;border-radius:1.5px;box-sizing:border-box"></div>
<div style="position:absolute;left:464.20px;top:223.30px;width:6.80px;height:6.80px;border-radius:50%;box-sizing:border-box;border:0.7px solid #79c85a"></div>
<svg style="position:absolute;left:465.40px;top:224.50px" width="4.4" height="4.4" viewBox="0 0 4.4 4.4"><path d="M0.8 2.3L1.9 3.3L3.7 1.2" stroke="#62bb42" stroke-width="0.8" fill="none"/></svg>
<div style="position:absolute;left:524.90px;top:223.20px;width:7.00px;height:7.00px;border-radius:50%;box-sizing:border-box;border:0.8px solid #f7b55a"></div>
<svg style="position:absolute;left:526.00px;top:224.30px" width="4.8" height="4.8" viewBox="0 0 4.8 4.8"><path d="M2.4 2.4V0.2A2.2 2.2 0 1 1 1.65 4.47Z" fill="#f39a1a"/></svg>
<div style="position:absolute;left:586.20px;top:223.40px;width:6.60px;height:6.60px;border-radius:50%;box-sizing:border-box;border:0.6px solid #cfcfcf"></div>
<div style="position:absolute;left:139.00px;top:235.42px;width:508.20px;height:0.70px;background:#efefef"></div>
<div style="position:absolute;left:144.60px;top:242.02px;width:6.00px;height:6.00px;border:0.65px solid #d9d9d9;border-radius:1.5px;box-sizing:border-box"></div>
<div style="position:absolute;left:158.40px;top:241.77px;font-size:5.000px;line-height:6.50px;color:#333;font-weight:400;white-space:nowrap;transform:scaleX(0.8800);transform-origin:0 50%">Vorgang #0Tr0</div>
<div style="position:absolute;left:219.70px;top:241.77px;font-size:5.000px;line-height:6.50px;color:#333;font-weight:400;white-space:nowrap;transform:scaleX(0.7925);transform-origin:0 50%">EWE Gas HA</div>
<div style="position:absolute;left:341.40px;top:242.12px;width:5.90px;height:5.90px;border:0.65px solid #d9d9d9;border-radius:1.5px;box-sizing:border-box"></div>
<div style="position:absolute;left:464.10px;top:241.52px;width:7.00px;height:7.00px;border-radius:50%;box-sizing:border-box;border:0.8px solid #f7b55a"></div>
<svg style="position:absolute;left:465.20px;top:242.62px" width="4.8" height="4.8" viewBox="0 0 4.8 4.8"><path d="M2.4 2.4V0.2A2.2 2.2 0 1 1 1.65 4.47Z" fill="#f39a1a"/></svg>
<div style="position:absolute;left:525.10px;top:241.72px;width:6.60px;height:6.60px;border-radius:50%;box-sizing:border-box;border:0.6px solid #cfcfcf"></div>
<div style="position:absolute;left:586.20px;top:241.72px;width:6.60px;height:6.60px;border-radius:50%;box-sizing:border-box;border:0.6px solid #cfcfcf"></div>
<div style="position:absolute;left:139.00px;top:253.74px;width:508.20px;height:0.70px;background:#efefef"></div>
<div style="position:absolute;left:144.60px;top:260.34px;width:6.00px;height:6.00px;border:0.65px solid #d9d9d9;border-radius:1.5px;box-sizing:border-box"></div>
<div style="position:absolute;left:158.40px;top:260.09px;font-size:5.000px;line-height:6.50px;color:#333;font-weight:400;white-space:nowrap;transform:scaleX(0.8800);transform-origin:0 50%">2025-05-13-01</div>
<div style="position:absolute;left:219.70px;top:260.09px;font-size:5.000px;line-height:6.50px;color:#333;font-weight:400;white-space:nowrap;transform:scaleX(0.7925);transform-origin:0 50%">EWE Gas HA</div>
<div style="position:absolute;left:341.40px;top:260.44px;width:5.90px;height:5.90px;border:0.65px solid #d9d9d9;border-radius:1.5px;box-sizing:border-box"></div>
<div style="position:absolute;left:464.20px;top:259.94px;width:6.80px;height:6.80px;border-radius:50%;box-sizing:border-box;border:0.7px solid #79c85a"></div>
<svg style="position:absolute;left:465.40px;top:261.14px" width="4.4" height="4.4" viewBox="0 0 4.4 4.4"><path d="M0.8 2.3L1.9 3.3L3.7 1.2" stroke="#62bb42" stroke-width="0.8" fill="none"/></svg>
<div style="position:absolute;left:524.90px;top:259.84px;width:7.00px;height:7.00px;border-radius:50%;box-sizing:border-box;border:0.8px solid #f7b55a"></div>
<svg style="position:absolute;left:526.00px;top:260.94px" width="4.8" height="4.8" viewBox="0 0 4.8 4.8"><path d="M2.4 2.4V0.2A2.2 2.2 0 1 1 1.65 4.47Z" fill="#f39a1a"/></svg>
<div style="position:absolute;left:586.20px;top:260.04px;width:6.60px;height:6.60px;border-radius:50%;box-sizing:border-box;border:0.6px solid #cfcfcf"></div>
<div style="position:absolute;left:139.00px;top:272.06px;width:508.20px;height:0.70px;background:#efefef"></div>
<div style="position:absolute;left:144.60px;top:278.66px;width:6.00px;height:6.00px;border:0.65px solid #d9d9d9;border-radius:1.5px;box-sizing:border-box"></div>
<div style="position:absolute;left:158.40px;top:278.41px;font-size:5.000px;line-height:6.50px;color:#333;font-weight:400;white-space:nowrap;transform:scaleX(0.8800);transform-origin:0 50%">2025-05-12-01</div>
<div style="position:absolute;left:219.70px;top:278.41px;font-size:5.000px;line-height:6.50px;color:#333;font-weight:400;white-space:nowrap;transform:scaleX(0.7925);transform-origin:0 50%">EWE Gas HA</div>
<div style="position:absolute;left:341.40px;top:278.76px;width:5.90px;height:5.90px;border:0.65px solid #d9d9d9;border-radius:1.5px;box-sizing:border-box"></div>
<div style="position:absolute;left:464.20px;top:278.26px;width:6.80px;height:6.80px;border-radius:50%;box-sizing:border-box;border:0.7px solid #79c85a"></div>
<svg style="position:absolute;left:465.40px;top:279.46px" width="4.4" height="4.4" viewBox="0 0 4.4 4.4"><path d="M0.8 2.3L1.9 3.3L3.7 1.2" stroke="#62bb42" stroke-width="0.8" fill="none"/></svg>
<div style="position:absolute;left:525.10px;top:278.36px;width:6.60px;height:6.60px;border-radius:50%;box-sizing:border-box;border:0.6px solid #cfcfcf"></div>
<div style="position:absolute;left:586.20px;top:278.36px;width:6.60px;height:6.60px;border-radius:50%;box-sizing:border-box;border:0.6px solid #cfcfcf"></div>
<div style="position:absolute;left:139.00px;top:290.38px;width:508.20px;height:0.70px;background:#efefef"></div>
<div style="position:absolute;left:144.60px;top:296.98px;width:6.00px;height:6.00px;border:0.65px solid #d9d9d9;border-radius:1.5px;box-sizing:border-box"></div>
<div style="position:absolute;left:158.40px;top:296.73px;font-size:5.000px;line-height:6.50px;color:#333;font-weight:400;white-space:nowrap;transform:scaleX(0.8800);transform-origin:0 50%">2025-05-11-02</div>
<div style="position:absolute;left:219.70px;top:296.73px;font-size:5.000px;line-height:6.50px;color:#333;font-weight:400;white-space:nowrap;transform:scaleX(0.7925);transform-origin:0 50%">EWE Gas HA</div>
<div style="position:absolute;left:341.40px;top:297.08px;width:5.90px;height:5.90px;border:0.65px solid #d9d9d9;border-radius:1.5px;box-sizing:border-box"></div>
<div style="position:absolute;left:464.20px;top:296.58px;width:6.80px;height:6.80px;border-radius:50%;box-sizing:border-box;border:0.7px solid #79c85a"></div>
<svg style="position:absolute;left:465.40px;top:297.78px" width="4.4" height="4.4" viewBox="0 0 4.4 4.4"><path d="M0.8 2.3L1.9 3.3L3.7 1.2" stroke="#62bb42" stroke-width="0.8" fill="none"/></svg>
<div style="position:absolute;left:524.90px;top:296.48px;width:7.00px;height:7.00px;border-radius:50%;box-sizing:border-box;border:0.8px solid #f7b55a"></div>
<svg style="position:absolute;left:526.00px;top:297.58px" width="4.8" height="4.8" viewBox="0 0 4.8 4.8"><path d="M2.4 2.4V0.2A2.2 2.2 0 1 1 1.65 4.47Z" fill="#f39a1a"/></svg>
<div style="position:absolute;left:586.20px;top:296.68px;width:6.60px;height:6.60px;border-radius:50%;box-sizing:border-box;border:0.6px solid #cfcfcf"></div>
<div style="position:absolute;left:139.00px;top:308.70px;width:508.20px;height:0.70px;background:#efefef"></div>
<div style="position:absolute;left:144.60px;top:315.30px;width:6.00px;height:6.00px;border:0.65px solid #d9d9d9;border-radius:1.5px;box-sizing:border-box"></div>
<div style="position:absolute;left:158.40px;top:315.05px;font-size:5.000px;line-height:6.50px;color:#333;font-weight:400;white-space:nowrap;transform:scaleX(0.8800);transform-origin:0 50%">2025-05-11-01</div>
<div style="position:absolute;left:219.70px;top:315.05px;font-size:5.000px;line-height:6.50px;color:#333;font-weight:400;white-space:nowrap;transform:scaleX(0.7925);transform-origin:0 50%">EWE Gas HA</div>
<div style="position:absolute;left:341.40px;top:315.40px;width:5.90px;height:5.90px;border:0.65px solid #d9d9d9;border-radius:1.5px;box-sizing:border-box"></div>
<div style="position:absolute;left:464.20px;top:314.90px;width:6.80px;height:6.80px;border-radius:50%;box-sizing:border-box;border:0.7px solid #79c85a"></div>
<svg style="position:absolute;left:465.40px;top:316.10px" width="4.4" height="4.4" viewBox="0 0 4.4 4.4"><path d="M0.8 2.3L1.9 3.3L3.7 1.2" stroke="#62bb42" stroke-width="0.8" fill="none"/></svg>
<div style="position:absolute;left:524.90px;top:314.80px;width:7.00px;height:7.00px;border-radius:50%;box-sizing:border-box;border:0.8px solid #f7b55a"></div>
<svg style="position:absolute;left:526.00px;top:315.90px" width="4.8" height="4.8" viewBox="0 0 4.8 4.8"><path d="M2.4 2.4V0.2A2.2 2.2 0 1 1 1.65 4.47Z" fill="#f39a1a"/></svg>
<div style="position:absolute;left:586.20px;top:315.00px;width:6.60px;height:6.60px;border-radius:50%;box-sizing:border-box;border:0.6px solid #cfcfcf"></div>
<div style="position:absolute;left:139.00px;top:369.20px;width:508.20px;height:6.00px;background:#f7f7f7"></div>
<div style="position:absolute;left:139.80px;top:370.40px;width:438.40px;height:2.60px;background:#c4c4c4;border-radius:1.3px"></div>
<svg style="position:absolute;left:569.80px;top:381.70px" width="4.4" height="4" viewBox="0 0 4.4 4"><path d="M0.5 0.3V3.7M3.8 0.4L2 2L3.8 3.6" stroke="#b8b8b8" stroke-width="0.55" fill="none"/></svg>
<svg style="position:absolute;left:581.60px;top:381.70px" width="3" height="4" viewBox="0 0 3 4"><path d="M2.5 0.4L0.8 2L2.5 3.6" stroke="#b8b8b8" stroke-width="0.55" fill="none"/></svg>
<div style="position:absolute;left:591.40px;top:380.35px;font-size:5.000px;line-height:6.50px;color:#333;font-weight:400;white-space:nowrap;transform:scaleX(0.8864);transform-origin:0 50%">1 – 11 von 11</div>
<svg style="position:absolute;left:626.30px;top:381.70px" width="3" height="4" viewBox="0 0 3 4"><path d="M0.5 0.4L2.2 2L0.5 3.6" stroke="#b8b8b8" stroke-width="0.55" fill="none"/></svg>
<svg style="position:absolute;left:636.80px;top:381.70px" width="4.4" height="4" viewBox="0 0 4.4 4"><path d="M3.9 0.3V3.7M0.6 0.4L2.4 2L0.6 3.6" stroke="#b8b8b8" stroke-width="0.55" fill="none"/></svg>
</div></div>
</body></html>
